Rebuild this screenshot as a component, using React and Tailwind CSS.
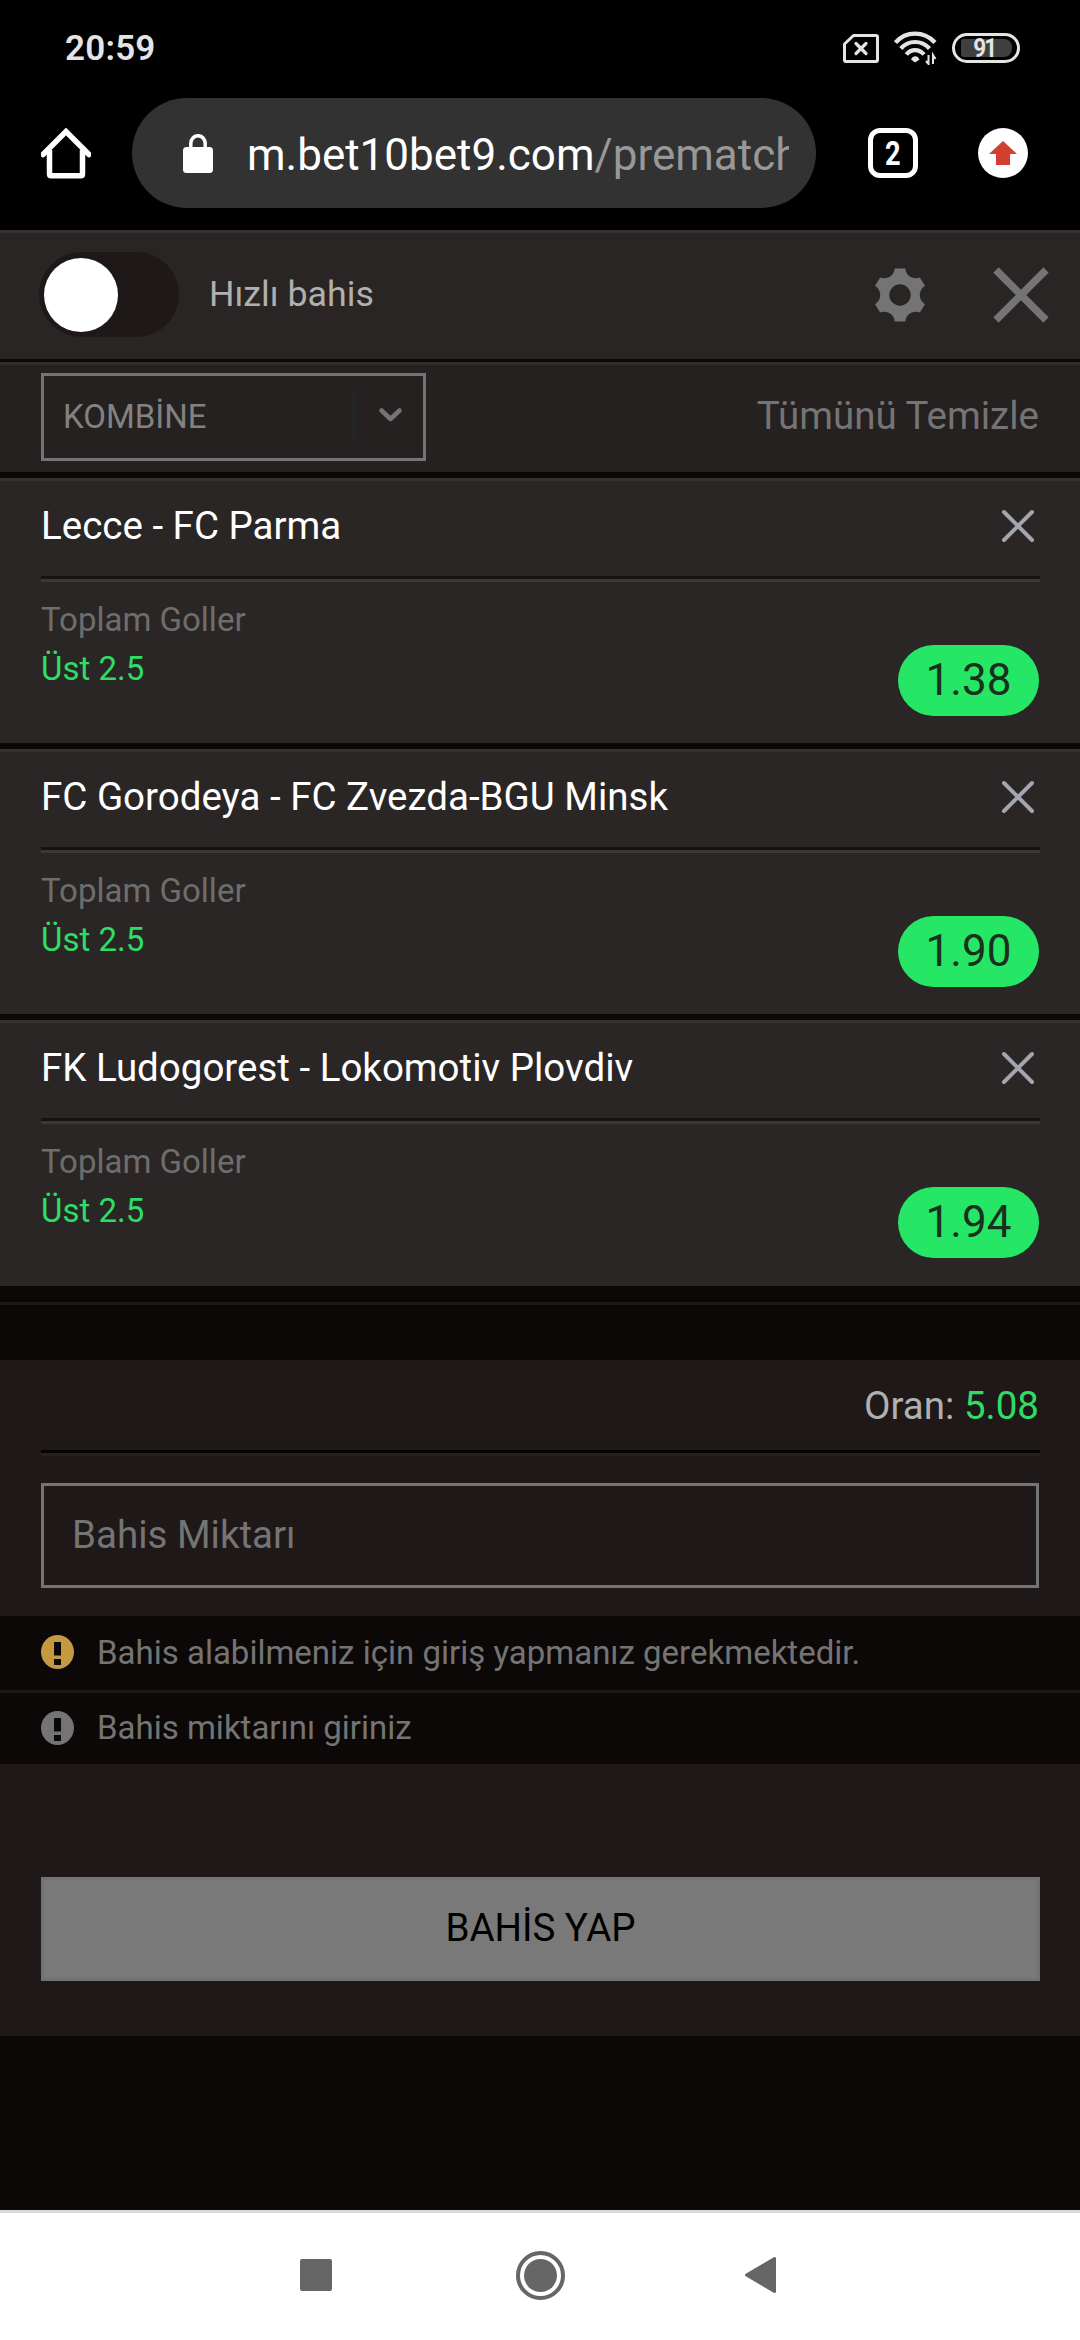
import React, { useState } from "react";

const initialBets = [
    { id: 1, match: "Lecce - FC Parma", market: "Toplam Goller", pick: "Üst 2.5", odd: "1.38" },
    { id: 2, match: "FC Gorodeya - FC Zvezda-BGU Minsk", market: "Toplam Goller", pick: "Üst 2.5", odd: "1.90" },
    { id: 3, match: "FK Ludogorest - Lokomotiv Plovdiv", market: "Toplam Goller", pick: "Üst 2.5", odd: "1.94" },
];

const StatusBar = () => (
    <div className="flex h-[96px] items-center justify-between pl-[65px] pr-[60px]">
        <span className="text-[35px] font-semibold leading-none tracking-[0.2px] text-[#e4e4e4]">20:59</span>
        <div className="flex items-center">
            <svg width="36" height="29" viewBox="0 0 36 29" fill="none" stroke="#e4e4e4" strokeWidth="3">
                <path d="M10.5 1.5H33a1.5 1.5 0 0 1 1.5 1.5v23a1.5 1.5 0 0 1-1.5 1.5H3A1.5 1.5 0 0 1 1.5 26V10z" strokeLinejoin="round" />
                <path d="M13 9.500l10 10M23 9.500l-10 10" strokeLinecap="round" strokeWidth="3.200" />
            </svg>
            <svg className="ml-[15px]" width="43" height="34" viewBox="0 0 43 34" fill="none" stroke="#e4e4e4" strokeWidth="4.200">
                <path d="M1.500 11.500C12-0.300 30-0.300 41 11.500" />
                <path d="M6.800 17.500C14.500 8.800 27.500 8.800 35.500 17.500" />
                <path d="M12.300 23.500C17 17.600 25 17.600 30 23.500" />
                <path d="M17 28.500c1.500-4.500 7-4.500 8.500 0L21.200 31.500z" fill="#e4e4e4" stroke="none" />
                <path d="M34.500 24v9l-2.500-3M39 33v-9l2.500 4" strokeWidth="2" />
            </svg>
            <div className="ml-[15px] flex h-[30px] w-[68px] items-center justify-center rounded-full border-[3px] border-[#e4e4e4]">
                <div className="flex h-[18px] w-[51px] items-center justify-center rounded-l-[3px] rounded-r-[8px] bg-[#3f3f3f] pr-1">
                    <span className="scale-x-90 text-[25px] font-bold leading-none tracking-[-2px] text-[#e4e4e4]">91</span>
                </div>
            </div>
        </div>
    </div>
);

const BrowserBar = () => (
    <div className="flex h-[134px] items-start pl-[41px] pt-[2px]">
        <svg className="mt-[30px]" width="50" height="51" viewBox="0 0 50 51" fill="none" stroke="#fff" strokeWidth="5.500">
            <path d="M2 26.500L25 3.500l23 23" strokeLinecap="round" />
            <path d="M8.500 22v24q0 1.800 1.800 1.800h29.400q1.800 0 1.800-1.800V22" />
        </svg>
        <div className="ml-[41px] flex h-[110px] w-[684px] items-center rounded-full bg-[#323232] pl-[51px]">
            <svg width="30" height="39" viewBox="0 0 30 39">
                <rect y="13" width="30" height="26" rx="3.500" fill="#fff" />
                <path d="M7.800 15V9.500a7.200 7.800 0 0 1 14.400 0V15" fill="none" stroke="#fff" strokeWidth="3.500" />
            </svg>
            <div className="ml-[34px] w-[542px] overflow-hidden whitespace-nowrap pt-1 text-[44px] leading-[56px] text-white">
                m.bet10bet9.com<span className="text-[#989898]">/prematch</span>
            </div>
        </div>
        <div className="ml-[52px] mt-[30px] flex h-[50px] w-[50px] items-center justify-center rounded-[12px] border-[5.500px] border-white">
            <span className="scale-x-80 text-[34px] font-bold leading-none text-white">2</span>
        </div>
        <svg className="ml-[60px] mt-[30px]" width="50" height="50" viewBox="0 0 50 50">
            <circle cx="25" cy="25" r="25" fill="#fff" />
            <path d="M25 13L39 26H32V37H18V26H11z" fill="#d23f31" />
        </svg>
    </div>
);

const SlipHeader = () => {
    const [quickBet, setQuickBet] = useState(false);

    return (
        <div className="flex h-[129px] items-center border-t-[3px] border-[#333130] bg-[#292524] pl-[39px] pr-[31px]">
            <button
                onClick={() => setQuickBet(!quickBet)}
                className={`mb-[3px] flex h-[85px] w-[140px] items-center rounded-full bg-[#1e1818] px-[5px] ${quickBet ? "justify-end" : ""}`}
            >
                <span className="h-[74px] w-[74px] rounded-full bg-white"></span>
            </button>
            <span className="mb-1 ml-[30px] text-[35.75px] leading-[48px] text-[#b0b0b0]">Hızlı bahis</span>
            <button className="mb-[3px] ml-auto">
                <svg width="50" height="54" viewBox="0 0 50 53">
                    <path
                        fillRule="evenodd"
                        fill="#747474"
                        d="M19.700 0H30.300A10.500 10.500 0 0 0 44.800 9L50 17.300A10.700 10.700 0 0 0 50 35.700L44.800 44A10.500 10.500 0 0 0 30.300 53H19.700A10.500 10.500 0 0 0 5.200 44L0 35.700A10.700 10.700 0 0 0 0 17.300L5.200 9A10.500 10.500 0 0 0 19.700 0zM25 15.800a10.700 10.700 0 1 0 0 21.400a10.700 10.700 0 1 0 0-21.400z"
                    />
                </svg>
            </button>
            <button className="mb-[3px] ml-[68px]">
                <svg width="56" height="56" viewBox="0 0 56 56" stroke="#747474" strokeWidth="7.500">
                    <path d="M3 3L53 53M53 3L3 53" />
                </svg>
            </button>
        </div>
    );
};

const SlipToolbar = ({ onClear }) => (
    <div className="flex h-[113px] items-start border-t-[3px] border-[#0d0808] bg-[#252120]">
        <div className="flex h-full w-full justify-between border-t-[3px] border-[#312d2c] pl-[41px] pr-[41px] pt-2">
            <div className="flex h-[88px] w-[385px] items-center border-[3px] border-[#747474] pl-[19px]">
                <span className="pb-0.5 text-[33px] leading-none text-[#828282]">KOMBİNE</span>
                <span className="ml-auto h-[50px] w-[3px] bg-[#222425]"></span>
                <svg className="mb-[5px] ml-[23px] mr-[20px]" width="25" height="16" viewBox="0 0 25 16" fill="none" stroke="#747474" strokeWidth="4.500" strokeLinecap="round" strokeLinejoin="round">
                    <path d="M3.500 3.500l9 8.500l9-8.500" />
                </svg>
            </div>
            <button onClick={onClear} className="h-[85px] text-[38.5px] leading-[85px] text-[#747474]">
                Tümünü Temizle
            </button>
        </div>
    </div>
);

const BetCard = ({ bet, onRemove }) => (
    <div className="h-[271px] border-t-[6px] border-[#0d0808]">
        <div className="h-full border-t-[3px] border-[#353130] bg-[#2a2625] px-[41px]">
            <div className="flex h-[95px] items-center justify-between pb-[5px]">
                <span className="text-[38.5px] leading-none text-white">{bet.match}</span>
                <button onClick={() => onRemove(bet.id)} className="mr-1">
                    <svg width="34" height="34" viewBox="0 0 34 34" stroke="#a3a5af" strokeWidth="4" strokeLinecap="round">
                        <path d="M3 3l28 28M31 3L3 31" />
                    </svg>
                </button>
            </div>
            <div className="-mr-px h-[6px] border-t-[3px] border-[#151211] bg-[#3e3635]"></div>
            <div className="flex justify-between">
                <div className="pt-[13px] text-[33px] leading-[49px]">
                    <p className="text-[#6e6d6c]">{bet.market}</p>
                    <p className="text-[#2fdd66]">{bet.pick}</p>
                </div>
                <div className="mt-[63px] h-[71px] w-[141px] rounded-full bg-[#26e765] text-center text-[44px] leading-[71px] text-[#19301f]">
                    {bet.odd}
                </div>
            </div>
        </div>
    </div>
);

const Notice = ({ color, children }) => (
    <div className="flex items-center bg-[#0d0808] pb-0.5 pl-[41px]">
        <svg width="33" height="34" viewBox="0 0 33 34">
            <ellipse cx="16.500" cy="17" rx="16.500" ry="17" fill={color} />
            <path d="M13 7h7v13.500h-7zM13 24h7v6h-7z" fill="#0d0808" />
        </svg>
        <span className="ml-[23px] text-[33px] leading-none text-[#747474]">{children}</span>
    </div>
);

const NavBar = () => (
    <div className="flex h-[130px] items-center border-t-[3px] border-[#d9d9d6] bg-white pb-[3px] pl-[300px]">
        <span className="h-8 w-8 rounded-[2px] bg-[#666]"></span>
        <svg className="ml-[184px]" width="49" height="49" viewBox="0 0 49 49">
            <circle cx="24.500" cy="24.500" r="22.500" fill="none" stroke="#666" strokeWidth="4" />
            <circle cx="24.500" cy="24.500" r="16.500" fill="#666" />
        </svg>
        <svg className="ml-[180px]" width="31" height="36" viewBox="0 0 31 36">
            <path d="M29.500 1.500v33L1.500 18z" fill="#666" stroke="#666" strokeWidth="3" strokeLinejoin="round" />
        </svg>
    </div>
);

const App = () => {
    const [bets, setBets] = useState(initialBets);
    const [stake, setStake] = useState("");

    return (
        <div className="flex h-[2340px] w-[1080px] flex-col overflow-hidden bg-[#0d0808] font-['Roboto',sans-serif]">
            <div className="bg-black">
                <StatusBar />
                <BrowserBar />
            </div>

            <SlipHeader />
            <SlipToolbar onClear={() => setBets([])} />

            <div className="bg-[#2a2625] pb-px">
                {bets.map((bet) => (
                    <BetCard key={bet.id} bet={bet} onRemove={(id) => setBets(bets.filter((b) => b.id !== id))} />
                ))}
            </div>

            <div className="mt-4 h-[3px] bg-[#1e1818]"></div>

            <div className="mt-[55px] flex h-[256px] flex-col bg-[#1e1818] px-[41px]">
                <div className="flex h-[90px] items-center justify-end pt-0.5 text-[38.5px] text-[#b0b0b0]">
                    Oran:&nbsp;<span className="text-[#2fdd66]">5.08</span>
                </div>
                <div className="-mr-px h-[6px] border-t-[3px] border-[#050202] bg-[#242120]"></div>
                <input
                    value={stake}
                    onChange={(e) => setStake(e.target.value)}
                    placeholder="Bahis Miktarı"
                    className="mt-[27px] h-[105px] w-full border-[3px] border-[#747474] px-[28px] pb-0.5 text-[38.5px] text-white placeholder:text-[#747474]"
                />
            </div>

            <div className="grid h-[148px] grid-rows-[74px_71px] gap-[3px] bg-[#1e1818]">
                <Notice color="#c4993f">Bahis alabilmeniz için giriş yapmanız gerekmektedir.</Notice>
                <Notice color="#747474">Bahis miktarını giriniz</Notice>
            </div>

            <div className="h-[272px] bg-[#1e1818] pl-[41px] pr-[40px] pt-[113px]">
                <button className="h-[104px] w-full border-[3px] border-[#727272] bg-[#797979] pb-px text-[38.5px] leading-none text-black">
                    BAHİS YAP
                </button>
            </div>

            <div className="mt-auto">
                <NavBar />
            </div>
        </div>
    );
};

export default App;
